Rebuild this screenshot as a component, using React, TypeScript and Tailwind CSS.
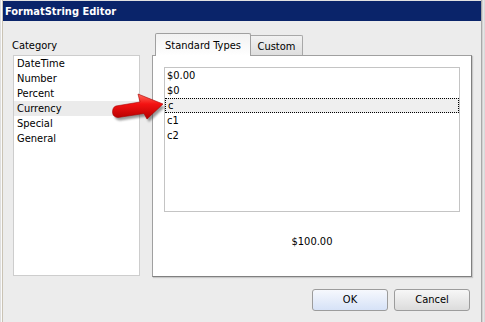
import React from "react";

const categories = ["DateTime", "Number", "Percent", "Currency", "Special", "General"];
const formats = ["$0.00", "$0", "c", "c1", "c2"];

function Arrow() {
  const d = "M6 14 L30 10 L28 2 L53 12 L37 27 L34 21.5 L8 25.5 Q3 25 2.5 20.5 Q2.5 15 6 14 Z";
  return (
    <svg
      className="absolute left-[110px] top-[92px] pointer-events-none"
      width="60"
      height="34"
      viewBox="0 0 60 34"
    >
      <defs>
        <linearGradient id="ag" x1="0" y1="0" x2="0" y2="1">
          <stop offset="0" stopColor="#ff6a5a" />
          <stop offset="0.4" stopColor="#f41212" />
          <stop offset="1" stopColor="#b40000" />
        </linearGradient>
        <filter id="blur" x="-20%" y="-20%" width="140%" height="140%">
          <feGaussianBlur stdDeviation="1.3" />
        </filter>
      </defs>
      <path d={d} fill="#444" opacity="0.55" transform="translate(2 3)" filter="url(#blur)" />
      <path d={d} fill="url(#ag)" stroke="#a80000" strokeWidth="0.6" />
    </svg>
  );
}

export default function App() {
  return (
    <div className="relative w-[485px] h-[322px] overflow-hidden flex bg-[#ececec] text-[11px] leading-[13px] text-black font-['DejaVu_Sans_Condensed','DejaVu_Sans',Tahoma,sans-serif] [font-stretch:semi-condensed]">
      {/* left frame */}
      <div className="w-[3px] shrink-0 flex">
        <div className="w-px bg-[#dedede]" />
        <div className="w-px bg-[#fafafa]" />
        <div className="w-px bg-[#cac3b4]" />
      </div>

      {/* main */}
      <div className="w-[478px] shrink-0 flex flex-col">
        <div className="h-px bg-[#e2e2e2]" />
        <div className="h-[20px] bg-[#0a246a] flex items-center pl-[2px]">
          <span className="text-white font-bold text-[11px]">FormatString Editor</span>
        </div>

        <div className="flex-1 flex pl-[10px]">
          {/* left column */}
          <div className="w-[127px] shrink-0 flex flex-col pt-[18px]">
            <div className="h-[16px] -ml-[1px]">Category</div>
            <div className="h-[221px] bg-white border border-[#cdcdcd] flex flex-col">
              {categories.map((c) => (
                <div
                  key={c}
                  className={`h-[15px] leading-[15px] pl-[3px] ${c === "Currency" ? "bg-[#ebebeb]" : ""}`}
                >
                  {c}
                </div>
              ))}
            </div>
          </div>

          {/* right column */}
          <div className="ml-[12px] w-[320px] shrink-0 flex flex-col pt-[12px]">
            <div className="flex items-end pl-[3px] h-[22px]">
              <div className="relative z-10 -mb-px w-[96px] h-[23px] bg-gradient-to-b from-[#f2f2f2] to-white border border-b-0 border-[#a0a0a0] rounded-t-[2px] flex items-start justify-center pt-[5px]">
                Standard Types
              </div>
              <div className="w-[52px] h-[20px] bg-gradient-to-b from-[#f2f2f2] to-[#dedede] border border-b-0 border-l-0 border-[#a8a8a8] rounded-tr-[2px] flex items-start justify-center pt-[4px]">
                Custom
              </div>
            </div>
            <div className="h-[222px] bg-white border border-[#a0a0a0] border-r-[#808080] border-b-[#808080] shadow-[1px_1px_1px_rgba(0,0,0,0.15)] flex flex-col pt-[11px] pl-[11px]">
              <div className="w-[296px] h-[145px] border border-[#c4c4c4] flex flex-col">
                {formats.map((f) => (
                  <div
                    key={f}
                    className={`h-[15px] leading-[13px] pl-[2px] ${
                      f === "c"
                        ? "bg-[#efefef] border border-dotted border-black pl-[1px]"
                        : "pt-px"
                    }`}
                  >
                    {f}
                  </div>
                ))}
              </div>
              <div className="mt-[23px] -ml-[11px] text-center">$100.00</div>
            </div>

            <div className="flex justify-end gap-[6px] pr-[2px] mt-[12px]">
              <button className="w-[76px] h-[22px] rounded-[3px] border border-[#9c9c9c] bg-gradient-to-b from-[#f6f8fd] to-[#d6e2f7] text-[11px] leading-[20px]">
                OK
              </button>
              <button className="w-[76px] h-[22px] rounded-[3px] border border-[#9c9c9c] bg-gradient-to-b from-[#f7f7f7] to-[#dcdcdc] text-[11px] leading-[20px]">
                Cancel
              </button>
            </div>
          </div>
        </div>
      </div>

      {/* right frame */}
      <div className="w-[4px] shrink-0 flex">
        <div className="w-px bg-[#a9a9a9]" />
        <div className="w-px bg-[#d2d2d2]" />
        <div className="w-px bg-[#e6e6e6]" />
        <div className="w-px bg-[#dadada]" />
      </div>

      <Arrow />
    </div>
  );
}
